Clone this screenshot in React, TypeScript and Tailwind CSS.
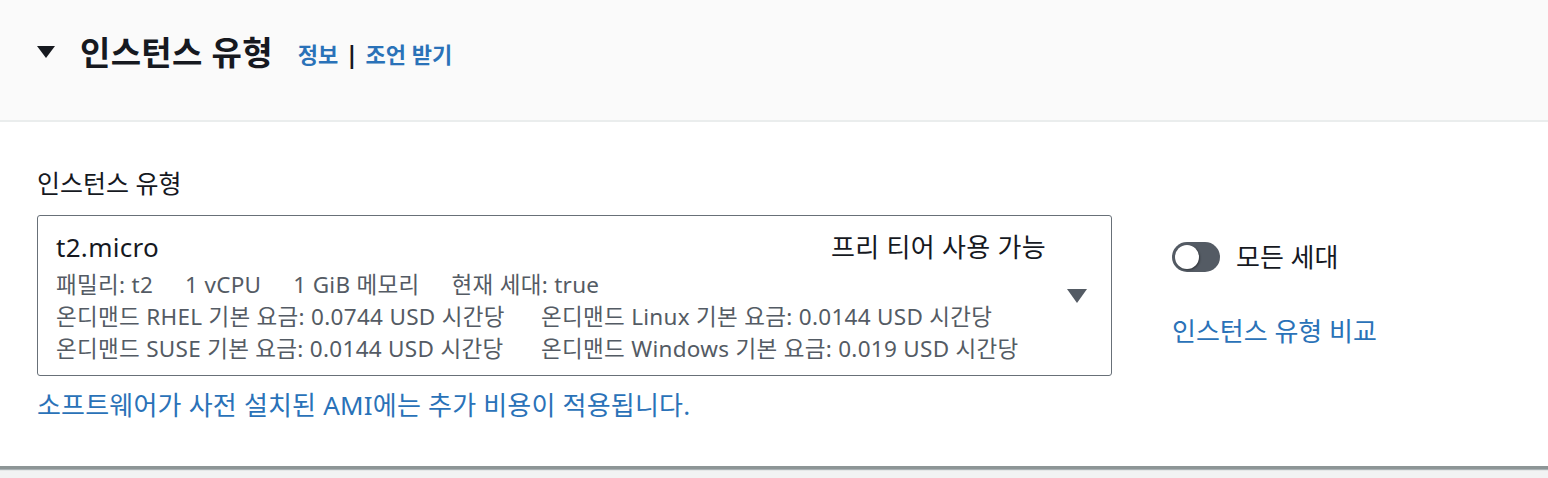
import React from "react";

const font = { fontFamily: '"Noto Sans", "Noto Sans CJK KR", sans-serif' };

export default function App() {
  return (
    <div className="w-[1548px] h-[478px] bg-[#f2f3f3] overflow-hidden" style={font}>
      <div className="bg-white border-b-[3px] border-[#8d9596] shadow-[0_1px_1px_rgba(0,28,36,0.3)]">
        {/* header */}
        <div className="h-[122px] bg-[#fafafa] border-b-2 border-[#eaeded] flex items-center pl-[37px] pb-[16px]">
          <svg width="18" height="12" viewBox="0 0 18 12" className="mr-[25px]">
            <polygon points="0,0 18,0 9,12" fill="#16191f" />
          </svg>
          <h2 className="text-[33px] font-bold text-[#16191f] tracking-[0.3px] leading-none">인스턴스 유형</h2>
          <div className="ml-[25px] text-[22px] font-bold text-[#2a72b8] flex items-center leading-none mt-[3px]">
            <span>정보</span>
            <span className="text-[#16191f] mx-[7px] text-[24px]">|</span>
            <span>조언 받기</span>
          </div>
        </div>
        {/* body */}
        <div className="h-[344px] pl-[37px] pt-[49px]">
          <div className="text-[25px] text-[#16191f] leading-none mb-[19px]">인스턴스 유형</div>
          <div className="flex items-start">
            <div className="w-[1075px] h-[161px] border border-[#687078] rounded-[3px] bg-white flex items-center pl-[18px] pr-[24px]">
              <div className="flex-1 self-start pt-[14px]">
                <div className="flex items-center justify-between">
                  <span className="text-[26px] text-[#16191f] leading-[34px] tracking-[0.3px]">t2.micro</span>
                  <span className="text-[26px] text-[#16191f] leading-[34px] tracking-[0.3px]">프리 티어 사용 가능</span>
                </div>
                <div className="text-[22.5px] tracking-[0.3px] text-[#545b64] leading-[32px] mt-[5px] whitespace-nowrap">
                  <div className="flex">
                    <span>패밀리: t2</span>
                    <span className="ml-[32px]">1 vCPU</span>
                    <span className="ml-[32px]">1 GiB 메모리</span>
                    <span className="ml-[32px]">현재 세대: true</span>
                  </div>
                  <div className="flex">
                    <span className="w-[485px]">온디맨드 RHEL 기본 요금: 0.0744 USD 시간당</span>
                    <span>온디맨드 Linux 기본 요금: 0.0144 USD 시간당</span>
                  </div>
                  <div className="flex">
                    <span className="w-[485px]">온디맨드 SUSE 기본 요금: 0.0144 USD 시간당</span>
                    <span>온디맨드 Windows 기본 요금: 0.019 USD 시간당</span>
                  </div>
                </div>
              </div>
              <svg width="20" height="14" viewBox="0 0 20 14" className="ml-[21px] shrink-0">
                <polygon points="0,0 20,0 10,14" fill="#545b64" />
              </svg>
            </div>
            <div className="ml-[60px] pt-[27px]">
              <div className="flex items-center">
                <div className="w-[48px] h-[30px] rounded-full bg-[#545b64] relative">
                  <div className="absolute left-[3px] top-[3px] w-[24px] h-[24px] rounded-full bg-white shadow-[1px_1px_2px_rgba(0,0,0,0.4)]" />
                </div>
                <span className="ml-[16px] text-[26px] text-[#16191f] leading-none">모든 세대</span>
              </div>
              <div className="mt-[46px] text-[26px] text-[#2a72b8] leading-none">인스턴스 유형 비교</div>
            </div>
          </div>
          <div className="mt-[16px] text-[26px] tracking-[0.2px] text-[#2a72b8] leading-none">소프트웨어가 사전 설치된 AMI에는 추가 비용이 적용됩니다.</div>
        </div>
      </div>
    </div>
  );
}
